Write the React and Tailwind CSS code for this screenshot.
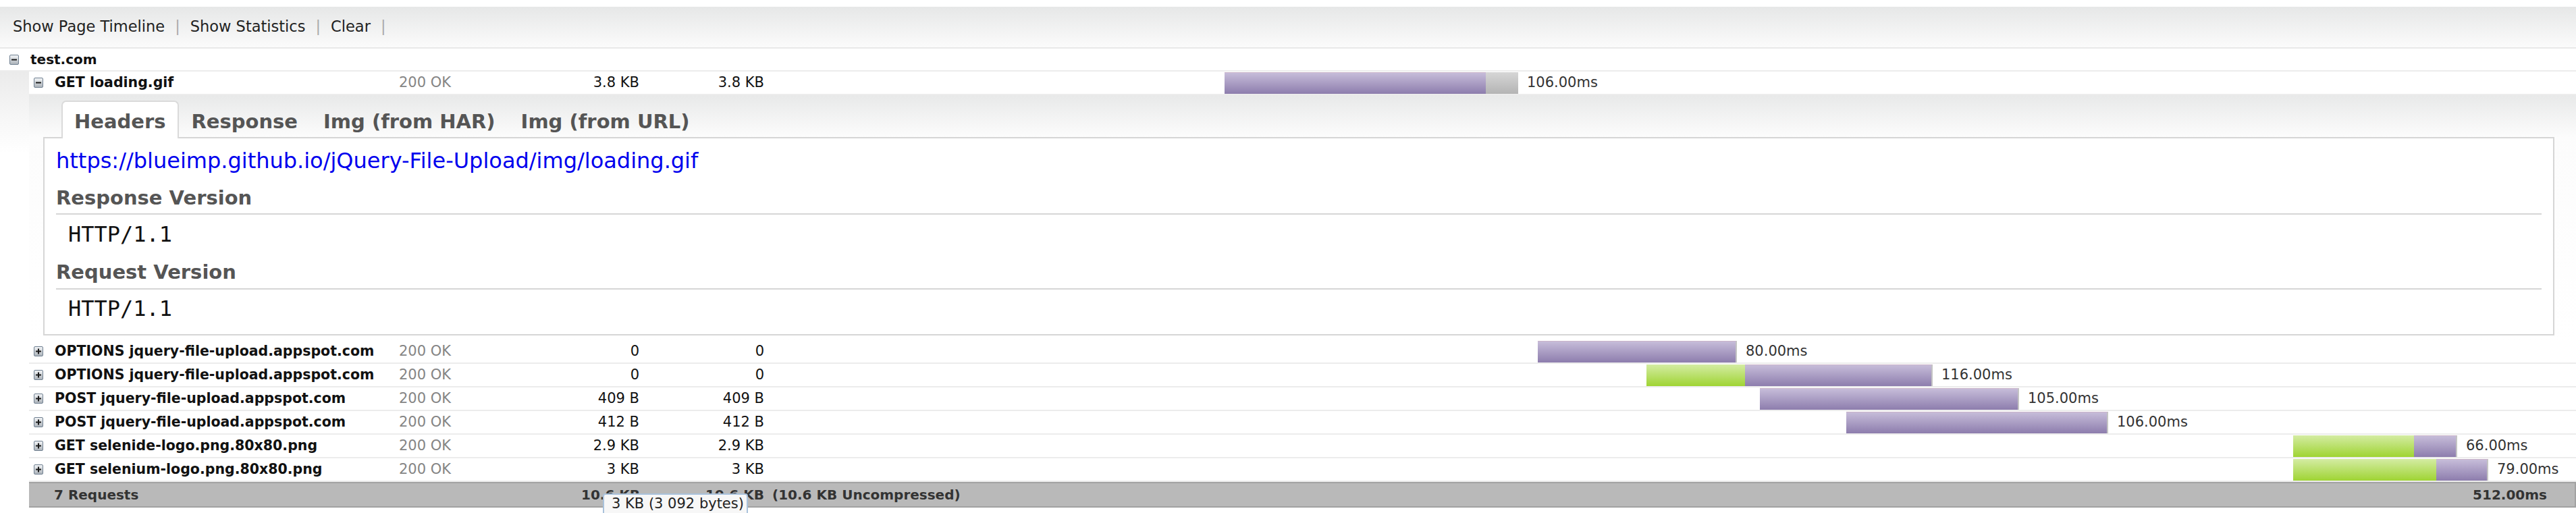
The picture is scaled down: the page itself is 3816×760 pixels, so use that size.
import React from 'react';

const TL_START = 1132;

const entries = [
  { name: 'OPTIONS jquery-file-upload.appspot.com', size: '0', size2: '0', x: 2278, segs: [['purple', 295]], time: '80.00ms' },
  { name: 'OPTIONS jquery-file-upload.appspot.com', size: '0', size2: '0', x: 2439, segs: [['green', 146], ['purple', 278]], time: '116.00ms' },
  { name: 'POST jquery-file-upload.appspot.com', size: '409 B', size2: '409 B', x: 2607, segs: [['purple', 384]], time: '105.00ms' },
  { name: 'POST jquery-file-upload.appspot.com', size: '412 B', size2: '412 B', x: 2735, segs: [['purple', 388]], time: '106.00ms' },
  { name: 'GET selenide-logo.png.80x80.png', size: '2.9 KB', size2: '2.9 KB', x: 3397, segs: [['green', 179], ['purple', 64]], time: '66.00ms' },
  { name: 'GET selenium-logo.png.80x80.png', size: '3 KB', size2: '3 KB', x: 3397, segs: [['green', 212], ['purple', 77]], time: '79.00ms' },
];

const segClass = {
  purple: 'bg-[linear-gradient(#c6bcd9,#8d7dad)] border-t border-[#c9b3c9]',
  green: 'bg-[linear-gradient(#d4eca3,#9fd433)]',
  gray: 'bg-[linear-gradient(#d6d6d6,#b4b4b4)]',
};

function ToggleIcon({ plus }) {
  return (
    <svg width="14" height="15" viewBox="0 0 14 15" className="shrink-0">
      <defs>
        <linearGradient id="tg" x1="0" y1="0" x2="0" y2="1">
          <stop offset="0" stopColor="#f4f6f8" />
          <stop offset="1" stopColor="#aab1b8" />
        </linearGradient>
      </defs>
      <rect x="0.5" y="0.5" width="13" height="14" rx="1.5" fill="url(#tg)" stroke="#6f7f90" />
      <rect x="3" y="6.5" width="8" height="2" fill="#1a1a1a" />
      {plus && <rect x="6" y="3.5" width="2" height="8" fill="#1a1a1a" />}
    </svg>
  );
}

function Timeline({ x, segs, time }) {
  return (
    <div className="flex-1 flex items-center h-full">
      <div className="shrink-0" style={{ width: x - TL_START }} />
      {segs.map(([kind, w], i) => (
        <div
          key={i}
          className={`h-[32px] shrink-0 ${segClass[kind]} ${i === segs.length - 1 && kind === 'purple' ? 'border-r-2 border-r-[#c4c4c4]' : ''}`}
          style={{ width: w }}
        />
      ))}
      <span className="ml-[13px] text-[21px] text-[#333]">{time}</span>
    </div>
  );
}

function EntryRow({ name, size, size2, open, children }) {
  return (
    <div className="flex items-center h-[35px] border-b-2 border-[#ececec] bg-white">
      <div className="w-[548px] flex items-center pl-[7px] gap-[17px]">
        <ToggleIcon plus={!open} />
        <span className="text-[20.5px] font-bold text-[#111] whitespace-nowrap">{name}</span>
      </div>
      <div className="w-[270px] text-[21px] text-[#858585]">200 OK</div>
      <div className="w-[86px] text-right text-[21px] text-[#111]">{size}</div>
      <div className="w-[185px] text-right text-[21px] text-[#111]">{size2}</div>
      {children}
    </div>
  );
}

export default function App() {
  const tabs = ['Headers', 'Response', 'Img (from HAR)', 'Img (from URL)'];

  return (
    <div className="relative w-full h-[760px] overflow-hidden bg-white font-['DejaVu_Sans',sans-serif]">
      <div className="mt-[10px] h-[62px] flex items-center pl-[19px] text-[22.5px] text-[#222] bg-[linear-gradient(#e6e7e7,#fbfbfb)] border-b-2 border-[#e9e9e9]">
        <span>Show Page Timeline</span>
        <span className="mx-[15px] text-[#aaa]">|</span>
        <span>Show Statistics</span>
        <span className="mx-[15px] text-[#aaa]">|</span>
        <span>Clear</span>
        <span className="mx-[15px] text-[#aaa]">|</span>
      </div>

      <div className="h-[34px] flex items-center pl-[14px] gap-[17px] border-b-2 border-[#ececec]">
        <ToggleIcon />
        <span className="text-[20px] font-bold text-[#111]">test.com</span>
      </div>

      <div className="pl-[43px] bg-[linear-gradient(#ebebeb,#ffffff_120px)]">
        <EntryRow name="GET loading.gif" size="3.8 KB" size2="3.8 KB" open>
          <Timeline x={1814} segs={[['purple', 387], ['gray', 48]]} time="106.00ms" />
        </EntryRow>

        <div className="pt-[8px] pb-[7px] pl-[21px] pr-[32px] bg-[linear-gradient(#e8e9e9,#fcfcfc_62px,#ffffff)]">
          <div className="relative z-10 flex items-end h-[54px] pl-[27px]">
            {tabs.map((t, i) => (
              <div
                key={t}
                className={`h-[56px] -mb-[2px] pt-[6px] px-[17px] flex items-center border-2 border-b-0 rounded-t-[7px] text-[29px] font-bold text-[#555] whitespace-nowrap ${i === 0 ? 'bg-white border-[#dadada]' : 'border-transparent'}`}
              >
                {t}
              </div>
            ))}
          </div>
          <div className="border-2 border-[#d6d6d6] bg-white px-[17px] pb-[11px]">
            <div className="h-[66px] flex items-center text-[32px] text-[#0000ee]">
              https://blueimp.github.io/jQuery-File-Upload/img/loading.gif
            </div>
            <div className="h-[47px] flex items-center text-[29px] font-bold text-[#555] border-b-2 border-[#d6d6d6]">
              Response Version
            </div>
            <div className="h-[57px] flex items-center pl-[18px] text-[32px] text-[#111] font-['DejaVu_Sans_Mono',monospace]">
              HTTP/1.1
            </div>
            <div className="h-[54px] pt-[6px] flex items-center text-[29px] font-bold text-[#555] border-b-2 border-[#d6d6d6]">
              Request Version
            </div>
            <div className="h-[55px] flex items-center pl-[18px] text-[32px] text-[#111] font-['DejaVu_Sans_Mono',monospace]">
              HTTP/1.1
            </div>
          </div>
        </div>

        {entries.map((e, i) => (
          <EntryRow key={i} name={e.name} size={e.size} size2={e.size2}>
            <Timeline x={e.x} segs={e.segs} time={e.time} />
          </EntryRow>
        ))}

        <div className="flex items-center h-[38px] bg-[#b9b9b9] border-y-2 border-r-2 border-[#a2a2a2] text-[20px] font-bold text-[#333]">
          <div className="w-[548px] pl-[37px]">7 Requests</div>
          <div className="w-[270px]" />
          <div className="w-[86px] text-right whitespace-nowrap">10.6 KB</div>
          <div className="w-[185px] text-right whitespace-nowrap">10.6 KB</div>
          <div className="flex-1 flex items-center justify-between pl-[12px] pr-[41px] whitespace-nowrap">
            <span>(10.6 KB Uncompressed)</span>
            <span>512.00ms</span>
          </div>
        </div>
      </div>

      <div className="absolute left-[893px] top-[731px] w-[215px] h-[40px] px-[11px] bg-[#f7f7f7] border-2 border-[#a9c2dc] rounded-[4px] text-[21px] leading-[26px] text-[#222] whitespace-nowrap">
        3 KB (3 092 bytes)
      </div>
    </div>
  );
}
